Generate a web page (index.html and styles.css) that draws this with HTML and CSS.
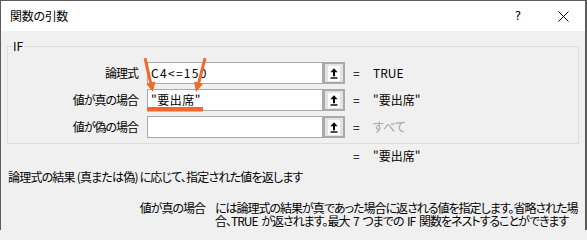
FILE: index.html
```html
<!DOCTYPE html>
<html lang="ja">
<head>
<meta charset="utf-8">
<title>関数の引数</title>
<link rel="stylesheet" href="styles.css">
</head>
<body>
<div class="window">
  <div class="titlebar">
    <span class="title">関数の引数</span>
    <span class="help">?</span>
    <span class="close"><svg width="11" height="11" viewBox="0 0 11 11"><path d="M0.5 0.5 L10.5 10.5 M10.5 0.5 L0.5 10.5" stroke="#000" stroke-width="1" fill="none"/></svg></span>
  </div>
  <div class="content">
    <fieldset class="group">
      <legend>IF</legend>
      <div class="arg-row">
        <span class="arg-label">論理式</span>
        <div class="field">
          <span class="input formula">C4&lt;=150</span>
          <span class="ref-btn"><span class="ref-icon"><svg width="12" height="15" viewBox="0 0 12 15"><path d="M6 2.3 L9.6 6.2 L2.4 6.2 Z" fill="#000"/><rect x="5" y="6" width="2" height="4.3" fill="#000"/><rect x="2.5" y="11.3" width="7" height="1.4" fill="#000"/></svg></span></span>
        </div>
        <span class="eq">=</span>
        <span class="val">TRUE</span>
      </div>
      <div class="arg-row">
        <span class="arg-label">値が真の場合</span>
        <div class="field">
          <span class="input">"要出席"</span>
          <span class="ref-btn"><span class="ref-icon"><svg width="12" height="15" viewBox="0 0 12 15"><path d="M6 2.3 L9.6 6.2 L2.4 6.2 Z" fill="#000"/><rect x="5" y="6" width="2" height="4.3" fill="#000"/><rect x="2.5" y="11.3" width="7" height="1.4" fill="#000"/></svg></span></span>
        </div>
        <span class="eq">=</span>
        <span class="val">"要出席"</span>
      </div>
      <div class="arg-row">
        <span class="arg-label">値が偽の場合</span>
        <div class="field">
          <span class="input"></span>
          <span class="ref-btn"><span class="ref-icon"><svg width="12" height="15" viewBox="0 0 12 15"><path d="M6 2.3 L9.6 6.2 L2.4 6.2 Z" fill="#000"/><rect x="5" y="6" width="2" height="4.3" fill="#000"/><rect x="2.5" y="11.3" width="7" height="1.4" fill="#000"/></svg></span></span>
        </div>
        <span class="eq">=</span>
        <span class="val muted">すべて</span>
      </div>
    </fieldset>
    <div class="result-row"><span class="eq">=</span><span class="val">"要出席"</span></div>
    <p class="desc">論理式の結果 (真または偽) に応じて、指定された値を返します</p>
    <div class="arg-help">
      <span class="help-name">値が真の場合</span>
      <p class="help-text">には論理式の結果が真であった場合に返される値を指定します。省略された場<br>合、TRUE が返されます。最大 7 つまでの IF 関数をネストすることができます</p>
    </div>
  </div>
  <svg class="annot" width="587" height="230" viewBox="0 0 587 230">
    <g fill="#f26a2b" stroke="none">
      <path d="M143.6 58.4 L146.5 57.8 L152.3 83.6 L149.4 84.2 Z"/>
      <path d="M153 92 L155.4 81.6 L146.2 83.7 Z"/>
      <path d="M203.6 57.8 L206.5 58.5 L199.9 84.1 L197 83.4 Z"/>
      <path d="M196 92 L203.1 83.8 L194 81.4 Z"/>
      <rect x="147" y="107" width="56" height="4.5"/>
    </g>
  </svg>
</div>
</body>
</html>
```

FILE: styles.css
```css
* {
  box-sizing: border-box;
}

html,
body {
  margin: 0;
  padding: 0;
}

body {
  font-family: "Noto Sans CJK JP", "Noto Sans", sans-serif;
  font-size: 12px;
  line-height: 16px;
  color: #000;
  font-feature-settings: "palt";
  background: #f0f0f0;
}

.window {
  position: relative;
  width: 587px;
  height: 230px;
  border-top: 1px solid #5c5c5c;
  border-left: 1px solid #5c5c5c;
  border-right: 2px solid #5c5c5c;
  background: #f0f0f0;
  overflow: hidden;
}

.titlebar {
  height: 30px;
  background: #fff;
  display: flex;
  align-items: center;
  padding-left: 9px;
  padding-right: 16px;
}

.title {
  flex: 1;
  letter-spacing: -0.3px;
}

.help {
  width: 10px;
  text-align: center;
  margin-right: 35px;
  font-family: "DejaVu Sans", sans-serif;
  font-size: 12px;
}

.close {
  display: flex;
  width: 11px;
  height: 11px;
}

.content {
  padding-top: 7px;
}

.group {
  margin: 0 6px;
  padding: 8px 0 5px 0;
  border: 1px solid #dcdcdc;
  min-width: 0;
}

.group legend {
  margin-left: 4px;
  padding: 0 1px;
  line-height: 16px;
}

.arg-row {
  display: flex;
  align-items: center;
  height: 22px;
  margin-bottom: 5px;
}

.arg-row:last-child {
  margin-bottom: 0;
}

.arg-label {
  width: 130px;
  text-align: right;
  margin-right: 9px;
  letter-spacing: -1px;
}

.field {
  display: flex;
  width: 198px;
  height: 22px;
}

.input {
  width: 176px;
  height: 22px;
  border: 1px solid #a9a9a9;
  background: #fff;
  padding-left: 3px;
  line-height: 20px;
  white-space: pre;
  letter-spacing: 0.5px;
}

.input.formula {
  letter-spacing: 1.3px;
}

.ref-btn {
  width: 22px;
  height: 22px;
  border: 2px solid #aaaaaa;
  background: #e3e3e3;
  display: flex;
  align-items: center;
  justify-content: center;
}

.ref-icon {
  display: flex;
  width: 12px;
  height: 15px;
  background: #fff;
}

.eq {
  width: 20px;
  margin-left: 8px;
}

.val.muted {
  color: #a3a3a3;
}

.result-row {
  display: flex;
  margin-top: 4px;
  padding-left: 344px;
  height: 16px;
}

.result-row .eq {
  margin-left: 8px;
}

.desc {
  margin: 5px 0 0 7px;
  letter-spacing: -0.8px;
}

.arg-help {
  display: flex;
  margin-top: 16px;
  line-height: 13px;
  letter-spacing: -1px;
  word-spacing: 2px;
}

.help-name {
  width: 204px;
  text-align: right;
  flex: none;
}

.help-text {
  margin: 0 0 0 10px;
  white-space: nowrap;
}

.annot {
  position: absolute;
  left: -1px;
  top: -1px;
  pointer-events: none;
}
```
